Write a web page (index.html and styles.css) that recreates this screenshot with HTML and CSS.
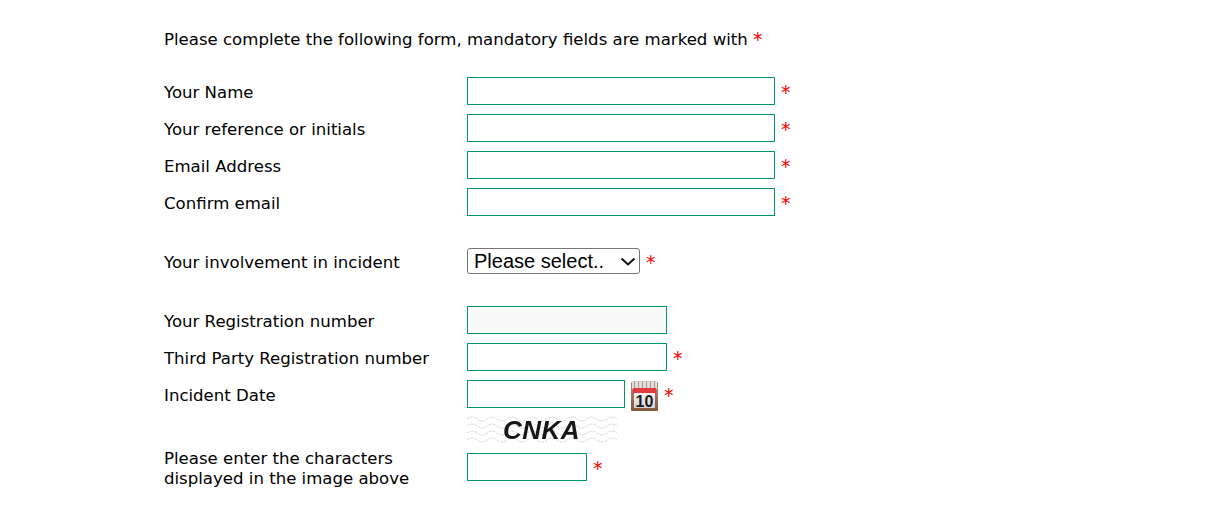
FILE: index.html
```html
<!DOCTYPE html>
<html lang="en">
<head>
    <meta charset="UTF-8">
    <title>Incident Form</title>
    <link rel="stylesheet" href="styles.css">
</head>
<body>
    <form class="incident-form">
        <p class="intro">Please complete the following form, mandatory fields are marked with <span class="req">*</span></p>

        <div class="group">
            <div class="row">
                <label class="label">Your Name</label>
                <input class="field wide" type="text">
                <span class="req">*</span>
            </div>
            <div class="row">
                <label class="label">Your reference or initials</label>
                <input class="field wide" type="text">
                <span class="req">*</span>
            </div>
            <div class="row">
                <label class="label">Email Address</label>
                <input class="field wide" type="text">
                <span class="req">*</span>
            </div>
            <div class="row">
                <label class="label">Confirm email</label>
                <input class="field wide" type="text">
                <span class="req">*</span>
            </div>
        </div>

        <div class="group">
            <div class="row">
                <label class="label">Your involvement in incident</label>
                <div class="select-wrap">
                    <select class="involvement">
                        <option>Please select..</option>
                    </select>
                    <svg class="select-arrow" width="16" height="9" viewBox="0 0 16 9">
                        <path d="M1.5 1.5L8 7.5l6.5-6" fill="none" stroke="#111" stroke-width="2"/>
                    </svg>
                </div>
                <span class="req">*</span>
            </div>
        </div>

        <div class="group">
            <div class="row">
                <label class="label">Your Registration number</label>
                <input class="field medium filled" type="text">
            </div>
            <div class="row">
                <label class="label">Third Party Registration number</label>
                <input class="field medium" type="text">
                <span class="req">*</span>
            </div>
            <div class="row">
                <label class="label">Incident Date</label>
                <input class="field date" type="text">
                <svg class="calendar" width="27" height="30" viewBox="0 0 27 30">
                    <defs>
                        <linearGradient id="cal-body" x1="0" y1="0" x2="0" y2="1">
                            <stop offset="0" stop-color="#b58a78"/>
                            <stop offset="1" stop-color="#84583c"/>
                        </linearGradient>
                        <linearGradient id="cal-page" x1="0" y1="0" x2="0" y2="1">
                            <stop offset="0" stop-color="#f4f4f4"/>
                            <stop offset="1" stop-color="#d4d4d4"/>
                        </linearGradient>
                    </defs>
                    <rect x="0" y="1" width="27" height="29" rx="1" fill="url(#cal-body)"/>
                    <rect x="1" y="0" width="25" height="8" fill="#e6e0dd"/>
                    <path d="M3.5 0v8M7.5 0v8M11.5 0v8M15.5 0v8M19.5 0v8M23.5 0v8" stroke="#a89e9a" stroke-width="1.2"/>
                    <rect x="2" y="7" width="23" height="6" fill="#e03a3e"/>
                    <rect x="3" y="12" width="21" height="15" fill="url(#cal-page)"/>
                    <text x="13.5" y="26" text-anchor="middle" class="calendar-day">10</text>
                </svg>
                <span class="req">*</span>
            </div>
            <div class="captcha-row">
                <div class="captcha">
                    <svg class="captcha-waves" width="150" height="31" viewBox="0 0 150 31">
                        <path d="M0 5q5-4 10 0t10 0 10 0 10 0 10 0 10 0 10 0 10 0 10 0 10 0 10 0 10 0 10 0 10 0 10 0" />
                        <path d="M0 12q5-4 10 0t10 0 10 0 10 0 10 0 10 0 10 0 10 0 10 0 10 0 10 0 10 0 10 0 10 0 10 0" />
                        <path d="M0 19q5-4 10 0t10 0 10 0 10 0 10 0 10 0 10 0 10 0 10 0 10 0 10 0 10 0 10 0 10 0 10 0" />
                        <path d="M0 26q5-4 10 0t10 0 10 0 10 0 10 0 10 0 10 0 10 0 10 0 10 0 10 0 10 0 10 0 10 0 10 0" />
                    </svg>
                    <span class="captcha-text">CNKA</span>
                </div>
            </div>
            <div class="row">
                <label class="label">Please enter the characters<br>displayed in the image above</label>
                <input class="field short" type="text">
                <span class="req">*</span>
            </div>
        </div>
    </form>
</body>
</html>
```

FILE: styles.css
```css
body {
    margin: 0;
    background: #fff;
    color: #000;
    font-family: "DejaVu Sans", Verdana, sans-serif;
    font-size: 16.57px;
}

.incident-form {
    padding: 30px 0 0 164px;
}

.intro {
    margin: 0 0 27px;
    line-height: 20px;
}

.intro .req {
    vertical-align: -1px;
}

.req {
    color: #f00;
    font-size: 19px;
    line-height: 1;
}

.row {
    display: flex;
    align-items: center;
    min-height: 28px;
    margin-bottom: 9px;
}

.row .req {
    margin: 2px 0 0 6px;
}

.label {
    width: 303px;
    flex: none;
    padding-top: 4px;
    line-height: 20px;
}

.field {
    box-sizing: border-box;
    height: 28px;
    padding: 0 4px;
    border: 1px solid #009966;
    border-radius: 0;
    background: #fff;
    font-size: 16px;
}

.wide { width: 308px; }
.medium { width: 200px; }
.date { width: 158px; }
.short { width: 120px; }

.filled {
    background: #f9f9f9;
}

.group {
    margin-bottom: 31px;
}

.select-wrap {
    position: relative;
    height: 26px;
}

.involvement {
    appearance: none;
    box-sizing: border-box;
    display: block;
    width: 173px;
    height: 26px;
    padding: 0 0 0 6px;
    font-family: "Liberation Sans", Arial, sans-serif;
    font-size: 20px;
    color: #000;
    background: #fff;
    border: 1px solid #767676;
    border-radius: 3px;
}

.select-arrow {
    position: absolute;
    top: 9px;
    right: 4px;
}

.calendar {
    align-self: flex-start;
    margin: 1px 0 -3px 6px;
}

.calendar-day {
    font-family: "Liberation Sans", Arial, sans-serif;
    font-size: 16px;
    font-weight: bold;
    fill: #1c1c1c;
}

.captcha-row {
    padding-left: 303px;
    margin: -3px 0 0;
}

.captcha {
    position: relative;
    width: 150px;
    height: 31px;
    overflow: hidden;
}

.captcha-waves {
    display: block;
}

.captcha-waves path {
    fill: none;
    stroke: #d6dcd2;
    stroke-width: 1;
    stroke-dasharray: 3 1;
}

.captcha-text {
    position: absolute;
    top: 1px;
    left: 36px;
    font-family: "Liberation Sans", Arial, sans-serif;
    font-size: 26px;
    font-style: italic;
    font-weight: bold;
    letter-spacing: 0.5px;
    color: #161616;
    filter: blur(0.4px);
}
```
